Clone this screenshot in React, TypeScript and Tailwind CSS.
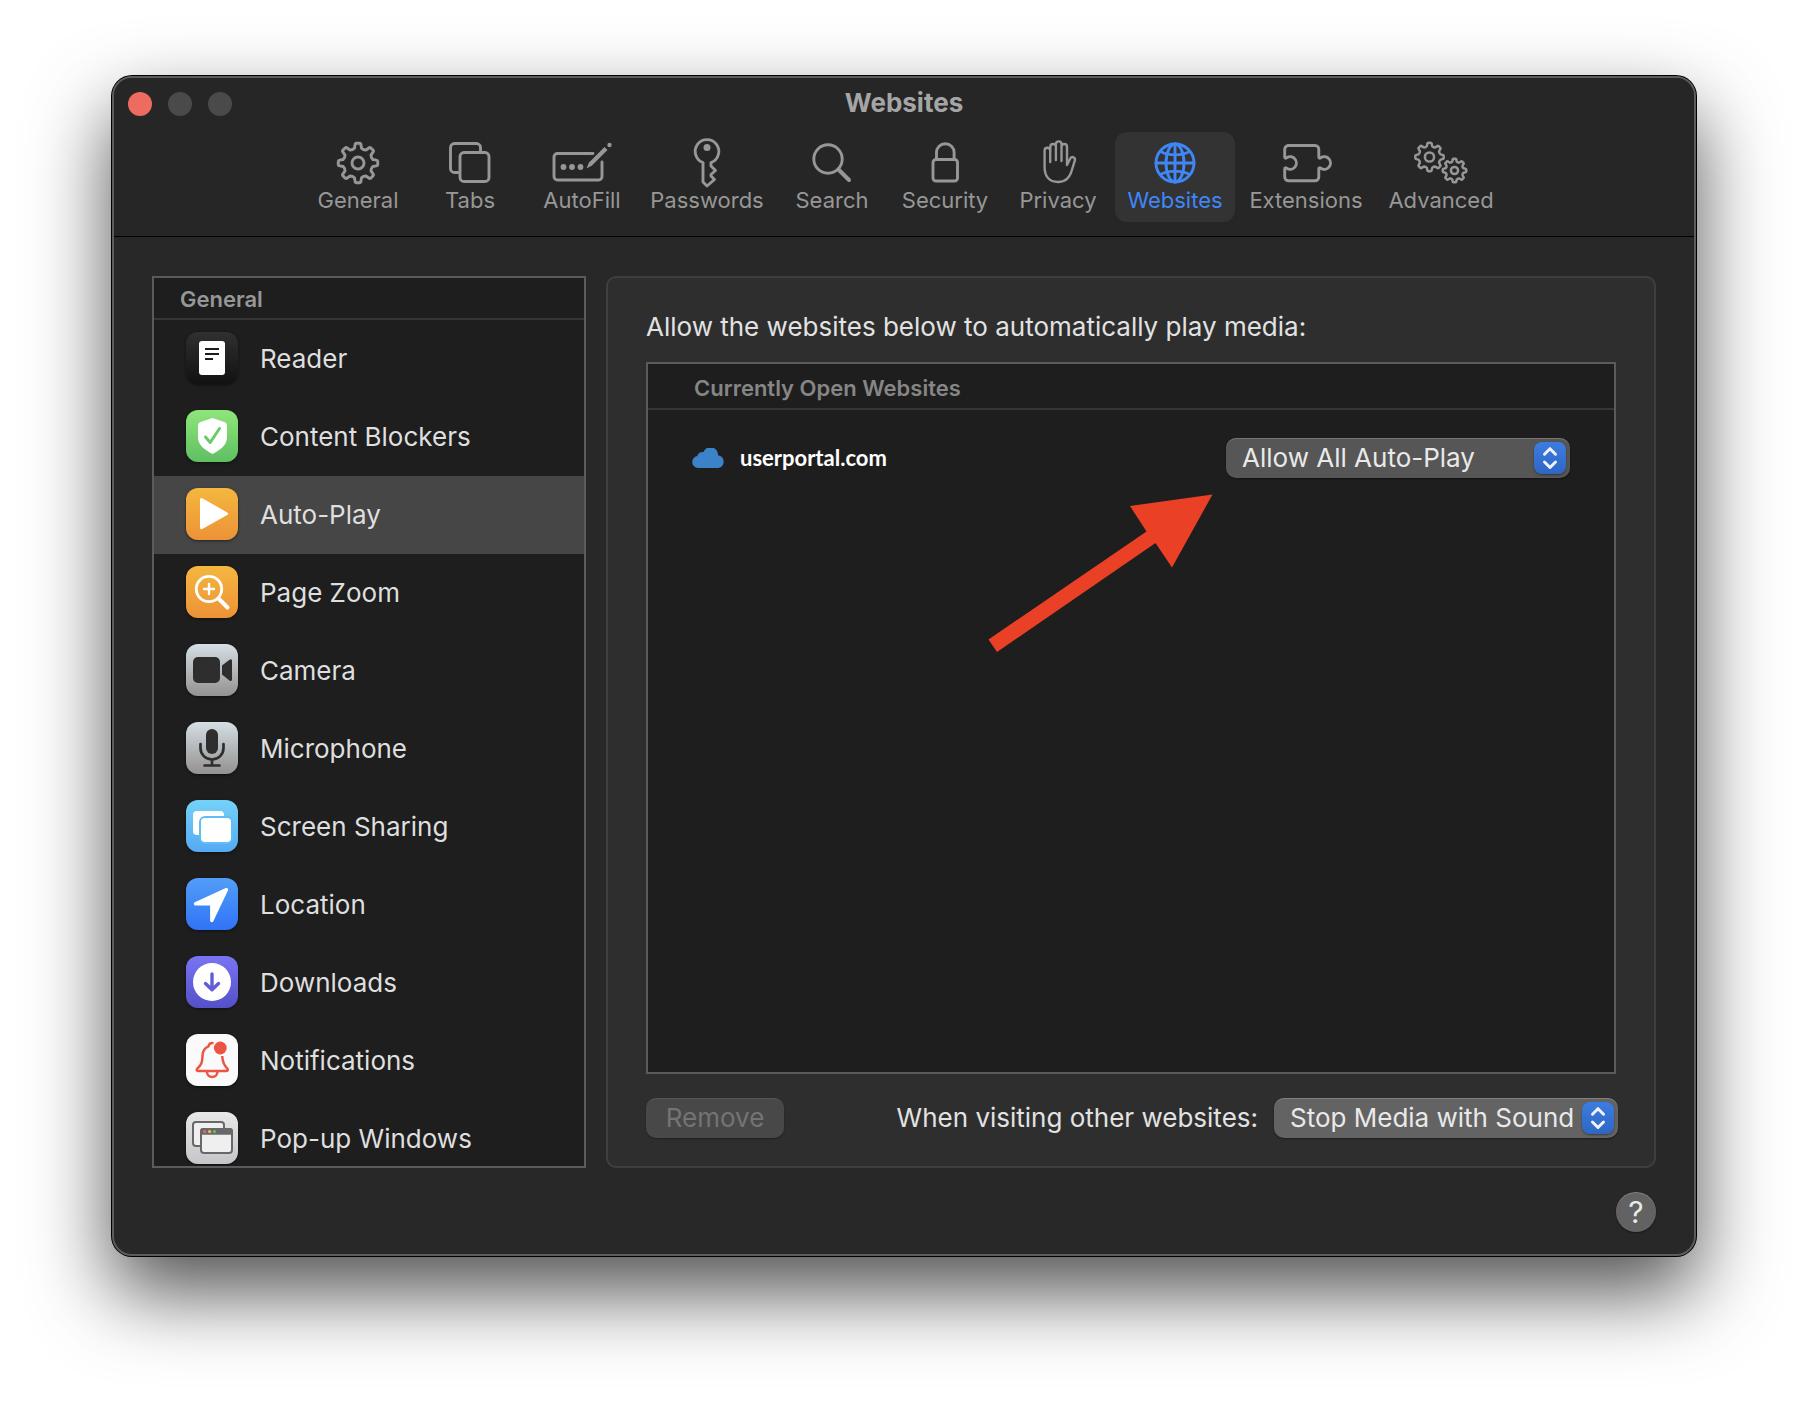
import React, { useState } from "react";

function gearPath(cx: number, cy: number, outer: number, inner: number, teeth: number) {
  const step = (Math.PI * 2) / teeth;
  const at = (r: number, a: number) =>
    `${(cx + r * Math.sin(a)).toFixed(2)} ${(cy - r * Math.cos(a)).toFixed(2)}`;
  const mid = inner + (outer - inner) * 0.75;
  let d = "";
  for (let i = 0; i < teeth; i++) {
    const a = i * step;
    d += i === 0 ? `M${at(inner + 0.4, a - step * 0.3)}` : `L${at(inner + 0.4, a - step * 0.3)}`;
    d += `L${at(mid, a - step * 0.2)}`;
    d += `Q${at(outer, a - step * 0.19)} ${at(outer, a - step * 0.1)}`;
    d += `L${at(outer, a + step * 0.1)}`;
    d += `Q${at(outer, a + step * 0.19)} ${at(mid, a + step * 0.2)}`;
    d += `L${at(inner + 0.4, a + step * 0.3)}`;
    d += `Q${at(inner - 0.8, a + step * 0.5)} ${at(inner + 0.4, a + step * 0.7)}`;
  }
  return d + "Z";
}

const toolbar: { label: string; width: string; icon: React.ReactNode }[] = [
  {
    label: "General",
    width: "w-[110px]",
    icon: (
      <>
        <path d={gearPath(30, 25, 19.8, 14.8, 8)} />
        <circle cx="30" cy="25" r="6" />
      </>
    ),
  },
  {
    label: "Tabs",
    width: "w-[110px]",
    icon: (
      <>
        <path d="M19.500 34.500h-5a4 4 0 0 1-4-4V9.500a4 4 0 0 1 4-4h22a4 4 0 0 1 4 4v5" />
        <rect x="20" y="14.500" width="29" height="29" rx="4" />
      </>
    ),
  },
  {
    label: "AutoFill",
    width: "w-[110px]",
    icon: (
      <>
        <path d="M41 15.500H5.500a3.500 3.500 0 0 0-3.500 3.500v19.500A3.500 3.500 0 0 0 5.500 42h41a3.500 3.500 0 0 0 3.500-3.500V24" />
        <g fill="currentColor" stroke="none">
          <circle cx="11.500" cy="29" r="2.900" />
          <circle cx="20" cy="29" r="2.900" />
          <circle cx="28.500" cy="29" r="2.900" />
          <circle cx="57.500" cy="7" r="2.200" />
          <path d="M34.500 30.500l2.500-6L52.500 9l3 3L40 27.500z" />
        </g>
      </>
    ),
  },
  {
    label: "Passwords",
    width: "w-[136px]",
    icon: (
      <>
        <path d="M26 24.500A11.800 11.800 0 1 1 34 24.500V28l4.500 4.500-4.500 4 0 1.500 3.500 3.500-7.500 6.500-4-4z" />
        <circle cx="30" cy="9.500" r="3.500" fill="currentColor" stroke="none" />
      </>
    ),
  },
  {
    label: "Search",
    width: "w-[110px]",
    icon: (
      <>
        <circle cx="26" cy="21" r="14.200" />
        <path d="M36.500 31.500L47 42" strokeWidth="4" />
      </>
    ),
  },
  {
    label: "Security",
    width: "w-[112px]",
    icon: (
      <>
        <rect x="18" y="21.500" width="24.500" height="21.500" rx="3" />
        <path d="M21.500 21V14.500a8.800 8.800 0 0 1 17.600 0V21" />
      </>
    ),
  },
  {
    label: "Privacy",
    width: "w-[110px]",
    icon: (
      <path
        strokeWidth="2.4"
        d="M22.200 24V12.500a2.800 2.800 0 0 0-5.600 0V29C16.600 38.500 21.500 44 30 44c8 0 11.700-4.500 13.600-11l3.200-10.400c1-3.200-3.200-5-4.800-1.700L39 27V8.800a2.700 2.700 0 0 0-5.500 0V23V6.200a2.800 2.800 0 0 0-5.600 0V22V8.800a2.800 2.800 0 0 0-5.600 0V14"
      />
    ),
  },
  {
    label: "Websites",
    width: "w-[120px]",
    icon: (
      <>
        <circle cx="30" cy="25" r="19" />
        <ellipse cx="30" cy="25" rx="9" ry="19" />
        <path d="M30 6v38M11 25h38M15.500 13.500c8 4.500 21 4.500 29 0M15.500 36.500c8-4.500 21-4.500 29 0" />
      </>
    ),
  },
  {
    label: "Extensions",
    width: "w-[138px]",
    icon: (
      <path d="M12 7.500h27a3.800 3.800 0 0 1 3.800 3.800V19c0 1.500 1 1.500 2 .7a6.300 6.300 0 1 1 0 10.600c-1-.8-2-.8-2 .7v8a3.800 3.800 0 0 1-3.800 3.800H12.500a3.800 3.800 0 0 1-3.800-3.800v-8c0-1.500 1-1.500 2-.7a6.300 6.300 0 1 0 0-10.600c-1 .8-2 .8-2-.7v-7.700a3.800 3.800 0 0 1 3.800-3.800z" />
    ),
  },
  {
    label: "Advanced",
    width: "w-[128px]",
    icon: (
      <g strokeWidth="2.500">
        <path d={gearPath(18.5, 19, 14.2, 10.9, 8)} />
        <circle cx="18.500" cy="19" r="4.600" />
        <path d={gearPath(43.500, 32.500, 11.800, 9, 8)} />
        <circle cx="43.500" cy="32.500" r="3.600" />
      </g>
    ),
  },
];

const orange = "bg-linear-to-b from-[#f3b73e] to-[#ed9237]";
const silver = "bg-linear-to-b from-[#d5dfe5] to-[#949290]";

const categories: { label: string; tile: string; icon: React.ReactNode }[] = [
  {
    label: "Reader",
    tile: "bg-linear-to-b from-[#303030] to-[#121212]",
    icon: (
      <>
        <rect x="13" y="9" width="26" height="34" rx="3" fill="#fff" />
        <path d="M19 17h14M19 22h14M19 27h8" stroke="#1c1c1c" strokeWidth="2" />
      </>
    ),
  },
  {
    label: "Content Blockers",
    tile: "bg-linear-to-b from-[#8fe57a] to-[#5fbf62]",
    icon: (
      <>
        <path
          d="M26.500 8L39 12.200q2 .8 2 3V27c0 8.500-7 13-14.500 17C19 40 12 35.500 12 27V15.200q0-2.200 2-3z"
          fill="#fff"
        />
        <path
          d="M19.500 27l4.700 5.500L33.500 18.500"
          stroke="#6ccb68"
          strokeWidth="3"
          fill="none"
          strokeLinecap="round"
          strokeLinejoin="round"
        />
      </>
    ),
  },
  {
    label: "Auto-Play",
    tile: orange,
    icon: <path d="M15.500 11.500l25 14.200-25 14z" fill="#fff" stroke="#fff" strokeWidth="3" strokeLinejoin="round" />,
  },
  {
    label: "Page Zoom",
    tile: orange,
    icon: (
      <g fill="none" stroke="#fff" strokeLinecap="round">
        <circle cx="23" cy="23" r="12.700" strokeWidth="2.800" />
        <path d="M33 33l8.500 8.500" strokeWidth="4" />
        <path d="M23 18v10M18 23h10" strokeWidth="2.400" />
      </g>
    ),
  },
  {
    label: "Camera",
    tile: silver,
    icon: (
      <g fill="#2e2e2e">
        <rect x="7" y="13" width="27" height="26" rx="5" />
        <path d="M36 21.500l7.500-5.800q2.500-1.500 2.500 1.200v18.400q0 2.700-2.500 1.200L36 30.500z" />
      </g>
    ),
  },
  {
    label: "Microphone",
    tile: silver,
    icon: (
      <>
        <rect x="20" y="7" width="12" height="25" rx="6" fill="#2e2e2e" />
        <path
          d="M14.500 22v4a11.500 11.500 0 0 0 23 0v-4M26 37.500V43M18.500 43.500h15"
          fill="none"
          stroke="#2e2e2e"
          strokeWidth="2.700"
          strokeLinecap="round"
        />
      </>
    ),
  },
  {
    label: "Screen Sharing",
    tile: "bg-linear-to-b from-[#75d2f7] to-[#54aaf3]",
    icon: (
      <>
        <rect x="7" y="11" width="31" height="24" rx="4" fill="#fff" />
        <rect x="14" y="17" width="32" height="26" rx="5" fill="#fff" stroke="#62bdf5" strokeWidth="2" />
      </>
    ),
  },
  {
    label: "Location",
    tile: "bg-linear-to-b from-[#539df8] to-[#3173f6]",
    icon: (
      <path
        d="M40.500 11.500L9.500 25.800H25.800V42.500z"
        fill="#fff"
        stroke="#fff"
        strokeWidth="3.400"
        strokeLinejoin="round"
      />
    ),
  },
  {
    label: "Downloads",
    tile: "bg-linear-to-b from-[#7a74f2] to-[#5350c8]",
    icon: (
      <>
        <circle cx="26" cy="26" r="19" fill="#fff" />
        <path
          d="M26 18v15M19.500 27.500l6.500 6.300 6.500-6.300"
          fill="none"
          stroke="#615cd8"
          strokeWidth="3.400"
          strokeLinecap="round"
          strokeLinejoin="round"
        />
      </>
    ),
  },
  {
    label: "Notifications",
    tile: "bg-[#fafafa]",
    icon: (
      <>
        <g fill="none" stroke="#ec5545" strokeWidth="2.500" strokeLinejoin="round">
          <path d="M27.500 9.200c-3-.6-4.500.6-5 3.100-4.200 1.700-6 5-6 9.500 0 7-1.500 9.200-5 12.500-1.500 1.500-.8 2.700.6 2.700h28.400c1.400 0 2-1.200.6-2.700-3.300-3.300-4.600-6.300-4.900-12.300" />
          <path d="M21 38a5.200 5 0 0 0 10.400 0" />
        </g>
        <circle cx="34.300" cy="14" r="6.400" fill="#ec5545" />
      </>
    ),
  },
  {
    label: "Pop-up Windows",
    tile: "bg-linear-to-b from-[#e8e8e8] to-[#c6c5ca]",
    icon: (
      <>
        <rect x="7" y="10" width="31" height="24" rx="3" fill="#efeff0" stroke="#68686a" strokeWidth="2" />
        <rect x="15" y="17" width="31" height="24" rx="3" fill="#efeff0" stroke="#68686a" strokeWidth="2" />
        <path d="M14 22.700V19a3 3 0 0 1 3-3h27a3 3 0 0 1 3 3v3.700z" fill="#68686a" />
        <circle cx="18.700" cy="19.500" r="1.600" fill="#ec6a5e" />
        <circle cx="23.600" cy="19.500" r="1.600" fill="#f4bf4f" />
        <circle cx="28.500" cy="19.500" r="1.600" fill="#61c554" />
      </>
    ),
  },
];

const policies = ["Allow All Auto-Play", "Stop Media with Sound", "Never Auto-Play"];

function PopUpMenu({ id, label, initial, tone }: { id: string; label?: string; initial: string; tone: string }) {
  const [value, setValue] = useState(initial);
  return (
    <div className="relative w-[344px] shrink-0">
      <select
        id={id}
        aria-label={label}
        value={value}
        onChange={(e) => setValue(e.target.value)}
        className={`h-10 w-full appearance-none rounded-[10px] pr-9 pb-px pl-4 text-[26px] leading-[38px] text-[#e9e9e9] shadow-[inset_0_1px_0_rgba(255,255,255,0.2),0_1px_2px_rgba(0,0,0,0.4)] ${tone}`}
      >
        {policies.map((p) => (
          <option key={p}>{p}</option>
        ))}
      </select>
      <span className="pointer-events-none absolute top-1 right-1 size-8 rounded-[8px] bg-linear-to-b from-[#3d7ce0] to-[#2f66c4] shadow-[0_1px_2px_rgba(0,0,0,0.4)]">
        <svg
          viewBox="0 0 32 32"
          className="size-8"
          fill="none"
          stroke="#eef3fc"
          strokeWidth="3"
          strokeLinecap="round"
          strokeLinejoin="round"
          aria-hidden="true"
        >
          <path d="M10.500 12.200L16 6.700l5.500 5.500M10.500 20l5.500 5.500 5.500-5.500" />
        </svg>
      </span>
    </div>
  );
}

function TitleBar() {
  return (
    <div className="grid h-[52px] grid-cols-[1fr_auto_1fr] items-center px-[14px]">
      <div className="flex gap-4">
        <button aria-label="Close" className="size-6 rounded-full bg-[#ed6b5f]" />
        <button aria-label="Minimize" className="size-6 rounded-full bg-[#4a4a4a]" />
        <button aria-label="Zoom" className="size-6 rounded-full bg-[#4a4a4a]" />
      </div>
      <h1 className="pb-[2px] text-[26px] leading-8 font-bold text-[#a5a5a5]">Websites</h1>
    </div>
  );
}

function Toolbar() {
  return (
    <nav className="flex justify-center gap-[2px] pt-[2px] pb-[14px]">
      {toolbar.map((item) => {
        const active = item.label === "Websites";
        return (
          <button
            key={item.label}
            aria-pressed={active}
            className={`flex h-[90px] flex-col items-center rounded-[12px] pt-[6px] ${item.width} ${
              active ? "bg-[#333333] text-[#3f86f7]" : "text-[#979797]"
            }`}
          >
            <svg
              viewBox="0 0 60 50"
              className="h-[50px] w-[60px]"
              fill="none"
              stroke="currentColor"
              strokeWidth="2.900"
              strokeLinecap="round"
              strokeLinejoin="round"
              aria-hidden="true"
            >
              {item.icon}
            </svg>
            <span className="text-[22px] leading-6">{item.label}</span>
          </button>
        );
      })}
    </nav>
  );
}

function Sidebar() {
  const [selected, setSelected] = useState("Auto-Play");
  return (
    <aside className="flex w-[434px] shrink-0 flex-col overflow-hidden border-2 border-[#5b5b5b] bg-[#1e1e1e]">
      <h2 className="h-[42px] shrink-0 border-b-2 border-[#363636] pl-[26px] text-[22px] leading-[43px] font-semibold text-[#979797]">
        General
      </h2>
      <ul className="min-h-0 flex-1 overflow-y-auto [scrollbar-width:none]">
        {categories.map((c) => (
          <li key={c.label}>
            <button
              onClick={() => setSelected(c.label)}
              className={`flex h-[78px] w-full items-center gap-[22px] pb-[2px] pl-8 text-left text-[26px] leading-8 text-[#dfdfdf] ${
                selected === c.label ? "bg-[#464646]" : ""
              }`}
            >
              <span className={`size-[52px] shrink-0 rounded-[12px] shadow-[0_1px_3px_rgba(0,0,0,0.5)] ${c.tile}`}>
                <svg viewBox="0 0 52 52" className="size-[52px]" aria-hidden="true">
                  {c.icon}
                </svg>
              </span>
              <span className="pt-[2px]">{c.label}</span>
            </button>
          </li>
        ))}
      </ul>
    </aside>
  );
}

function WebsitesPanel() {
  return (
    <main className="flex min-w-0 flex-1 flex-col rounded-[10px] border-2 border-[#3f3f3f] bg-[#2e2e2e] px-[38px] pt-[33px] pb-7">
      <p className="text-[26px] leading-8 text-[#e2e2e2]">Allow the websites below to automatically play media:</p>
      <section className="relative mt-[19px] flex-1 border-2 border-[#5b5b5b] bg-[#1e1e1e]">
        <h2 className="h-[46px] border-b-2 border-[#363636] pl-[46px] text-[22px] leading-[49px] font-semibold text-[#868686]">
          Currently Open Websites
        </h2>
        <div className="flex h-24 items-center pr-11 pl-11">
          <svg viewBox="0 0 32 20" className="h-5 w-8" fill="#3b82c8" aria-hidden="true">
            <path d="M6 20a6 6 0 0 1-.8-11.900A5.500 5.500 0 0 1 11.500 4 7.500 7.500 0 0 1 26 7.200 6.500 6.500 0 0 1 26.500 20z" />
          </svg>
          <span className="flex-1 pl-4 font-['Lato'] text-[22px] leading-7 font-bold text-white">userportal.com</span>
          <PopUpMenu id="site-policy" label="userportal.com" initial="Allow All Auto-Play" tone="bg-[#565656]" />
        </div>
        <svg
          viewBox="0 0 226 160"
          className="pointer-events-none absolute top-[130px] right-[401px] h-[160px] w-[226px]"
          fill="#ea4126"
          aria-hidden="true"
        >
          <path d="M225.500 .5L143 12l16.500 25.500L1.500 145.500 10 158l158.500-109L185 73.500z" />
        </svg>
      </section>
      <div className="-mr-[2px] flex items-center pt-6">
        <button
          disabled
          className="h-10 w-[138px] rounded-[10px] bg-[#484848] pb-px text-[26px] leading-8 text-[#747474] shadow-[inset_0_1px_0_rgba(255,255,255,0.08),0_1px_2px_rgba(0,0,0,0.3)]"
        >
          Remove
        </button>
        <label
          htmlFor="default-policy"
          className="ml-auto pr-4 pb-px text-[26px] leading-8 whitespace-nowrap text-[#e2e2e2]"
        >
          When visiting other websites:
        </label>
        <PopUpMenu id="default-policy" initial="Stop Media with Sound" tone="bg-[#636363]" />
      </div>
    </main>
  );
}

export default function App() {
  return (
    <div className="flex h-screen min-h-[900px] bg-white px-28 pt-[76px] pb-[148px] font-['Inter',sans-serif]">
      <div className="flex min-w-0 flex-1 flex-col rounded-[20px] border-2 border-[#5c5c5c] bg-[#282828] shadow-[0_0_0_1px_#000,0_36px_80px_rgba(0,0,0,0.69)]">
        <header className="rounded-t-[18px] border-b border-black bg-[#262626]">
          <TitleBar />
          <Toolbar />
        </header>
        <div className="flex min-h-0 flex-1 flex-col px-[38px] pt-[39px] pb-[22px]">
          <div className="flex min-h-0 flex-1 gap-5">
            <Sidebar />
            <WebsitesPanel />
          </div>
          <button
            aria-label="Help"
            className="mt-6 size-10 shrink-0 self-end rounded-full bg-[#626262] text-[30px] leading-10 text-[#e9e9e9] shadow-[inset_0_1px_0_rgba(255,255,255,0.2),0_1px_2px_rgba(0,0,0,0.4)]"
          >
            ?
          </button>
        </div>
      </div>
    </div>
  );
}
